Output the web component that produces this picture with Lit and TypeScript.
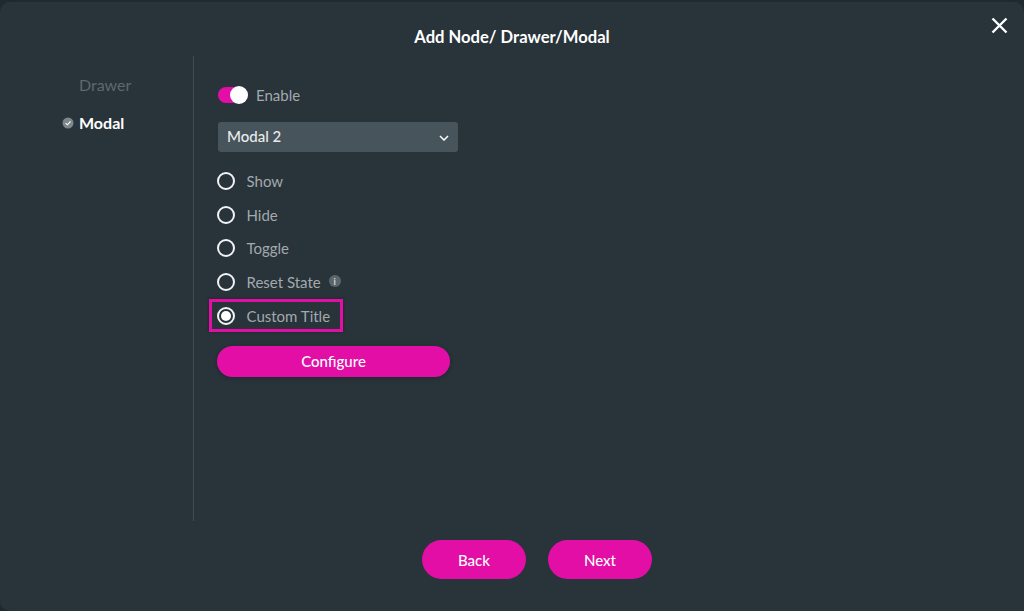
import { LitElement, html, css } from "lit";
import { customElement } from "lit/decorators.js";
import { classMap } from "lit/directives/class-map.js";

const ACTIONS = ["Show", "Hide", "Toggle", "Reset State", "Custom Title"];

@customElement("app-root")
export class AppRoot extends LitElement {
  static properties = { selected: {} };

  static styles = css`
    :host {
      display: block;
      width: 1024px;
      height: 611px;
      overflow: hidden;
      background: #1f2a30;
      font-family: Lato, "Open Sans", sans-serif;
    }

    .dialog {
      position: relative;
      box-sizing: border-box;
      height: 609px;
      margin-top: 2px;
      display: flex;
      flex-direction: column;
      background: #28333a;
      border-radius: 10px 10px 0 10px;
    }

    .title {
      height: 54px;
      padding-top: 24px;
      box-sizing: border-box;
      text-align: center;
      color: #fff;
      font-size: 16.6px;
      line-height: 22px;
      font-weight: 700;
    }

    .close {
      position: absolute;
      left: 991px;
      top: 15px;
      width: 17px;
      height: 17px;
    }

    .body {
      display: flex;
      height: 465px;
    }

    .nav {
      box-sizing: border-box;
      width: 194px;
      padding-top: 18px;
      border-right: 1px solid #414c53;
      display: flex;
      flex-direction: column;
      gap: 16px;
    }

    .nav-item {
      display: flex;
      align-items: center;
      height: 22px;
      padding-left: 62px;
      font-size: 16px;
      line-height: 22px;
    }

    .nav-item--idle {
      padding-left: 79px;
      color: #5f686e;
    }

    .nav-item--active {
      color: #fff;
      font-weight: 700;
    }

    .check {
      width: 12px;
      height: 12px;
      margin-right: 5px;
    }

    .panel {
      padding: 27px 0 0 24px;
      display: flex;
      flex-direction: column;
    }

    .enable {
      display: flex;
      align-items: center;
      height: 23px;
      color: #a3a9ad;
      font-size: 15px;
    }

    .switch {
      position: relative;
      width: 30px;
      height: 16px;
      margin-right: 8px;
      border-radius: 8px;
      background: #e20ea6;
    }

    .knob {
      position: absolute;
      right: 0;
      top: -1px;
      width: 18px;
      height: 18px;
      border-radius: 50%;
      background: #fff;
    }

    .select {
      box-sizing: border-box;
      display: flex;
      align-items: center;
      justify-content: space-between;
      width: 240px;
      height: 30px;
      margin-top: 16px;
      padding: 0 9px 2px;
      border-radius: 3px;
      background: #47545b;
      color: #e9ebec;
      font-size: 15px;
      font-weight: 500;
    }

    .chevron {
      width: 10px;
      height: 6px;
      margin-top: 4px;
    }

    .radios {
      display: flex;
      flex-direction: column;
      margin-top: 12.5px;
    }

    .radio {
      position: relative;
      display: flex;
      align-items: center;
      height: 33.6px;
      color: #a3a9ad;
      font-size: 15px;
    }

    .dot {
      box-sizing: border-box;
      width: 18px;
      height: 18px;
      margin-left: -1px;
      margin-right: 11.5px;
      border: 2px solid #f2f3f4;
      border-radius: 50%;
      display: flex;
      align-items: center;
      justify-content: center;
    }

    .dot--on::after {
      content: "";
      width: 10px;
      height: 10px;
      border-radius: 50%;
      background: #fff;
    }

    .info {
      display: flex;
      align-items: center;
      justify-content: center;
      width: 12px;
      height: 12px;
      margin-left: 8px;
      margin-top: -2px;
      border-radius: 50%;
      background: #5b666c;
      color: #d5d8da;
      font-size: 9px;
      font-weight: 700;
    }

    .highlight {
      position: absolute;
      left: -9px;
      top: 0.5px;
      box-sizing: border-box;
      width: 134px;
      height: 33px;
      border: 3px solid #e20ea6;
      box-shadow: 0 0 3px rgba(0, 0, 0, 0.3);
    }

    .btn {
      border: 0;
      padding: 0;
      background: #e20ea6;
      color: #fff;
      font-family: inherit;
      font-size: 15px;
      font-weight: 500;
    }

    .configure {
      width: 233px;
      height: 31px;
      margin-top: 13.5px;
      margin-left: -1px;
      border-radius: 16px;
      box-shadow: 0 1px 4px rgba(0, 0, 0, 0.25);
    }

    .footer {
      display: flex;
      justify-content: center;
      gap: 22px;
      margin-top: 19px;
      padding-left: 50px;
    }

    .footer .btn {
      width: 104px;
      height: 39px;
      border-radius: 20px;
    }
  `;

  declare selected: string;

  constructor() {
    super();
    this.selected = "Custom Title";
  }

  render() {
    return html`
      <div class="dialog">
        <div class="title">Add Node/ Drawer/Modal</div>
        <svg class="close" viewBox="0 0 17 17">
          <path d="M1.5 1.5 15.5 15.5M15.5 1.5 1.5 15.5" stroke="#fff" stroke-width="2.4" fill="none" />
        </svg>

        <div class="body">
          <div class="nav">
            <div class="nav-item nav-item--idle">Drawer</div>
            <div class="nav-item nav-item--active">
              <svg class="check" viewBox="0 0 12 12">
                <circle cx="6" cy="6" r="5.5" fill="#7d878c" />
                <path d="M3.6 6.2 5.3 7.8 8.5 4.5" stroke="#fff" stroke-width="1.1" fill="none" />
              </svg>
              Modal
            </div>
          </div>

          <div class="panel">
            <div class="enable">
              <div class="switch"><div class="knob"></div></div>
              Enable
            </div>
            <div class="select">
              Modal 2
              <svg class="chevron" viewBox="0 0 10 6">
                <path d="M1 1 5 5 9 1" stroke="#fff" stroke-width="1.5" fill="none" />
              </svg>
            </div>
            <div class="radios">
              ${ACTIONS.map(
                (name) => html`
                  <div class="radio">
                    <span class=${classMap({ dot: true, "dot--on": name === this.selected })}></span>
                    ${name}
                    ${name === "Reset State" ? html`<span class="info">i</span>` : ""}
                    ${name === this.selected ? html`<div class="highlight"></div>` : ""}
                  </div>
                `
              )}
            </div>
            <button class="btn configure">Configure</button>
          </div>
        </div>

        <div class="footer">
          <button class="btn">Back</button>
          <button class="btn">Next</button>
        </div>
      </div>
    `;
  }
}
